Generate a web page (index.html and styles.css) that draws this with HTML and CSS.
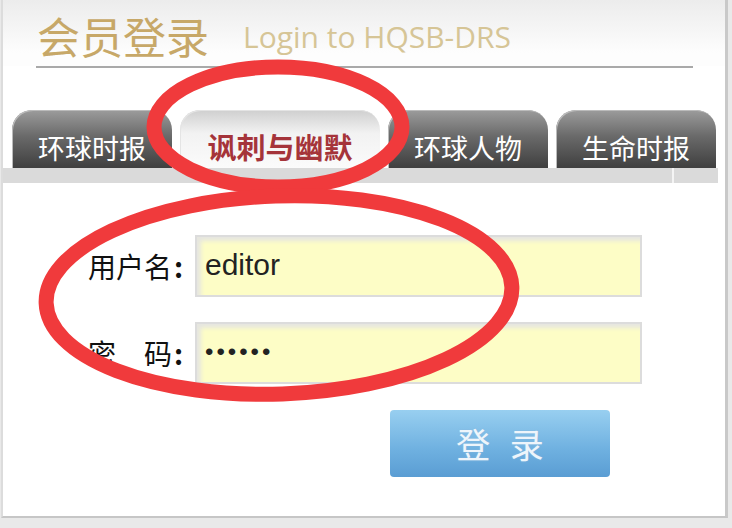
FILE: index.html
```html
<!DOCTYPE html>
<html lang="zh-CN">
  <head>
    <meta charset="utf-8">
    <meta name="viewport" content="width=device-width, initial-scale=1">
    <title>会员登录</title>
    <link rel="stylesheet" href="styles.css">
  </head>
  <body>
  <div id="panel">
    <div id="head">
      <h1>会员登录</h1><span class="sub">Login to HQSB-DRS</span>
    </div>
    <div id="rule"></div>
    <div id="tabs">
      <div class="tab">环球时报</div>
      <div class="tab active">讽刺与幽默</div>
      <div class="tab">环球人物</div>
      <div class="tab">生命时报</div>
    </div>
    <div id="band"><span class="notch"></span></div>
    <form id="login" onsubmit="return false">
      <label for="user">用户名<b>:</b></label>
      <input id="user" type="text" value="editor">
      <label for="pass">密　码<b>:</b></label>
      <input id="pass" type="password" value="123456">
      <button class="go">登 录</button>
    </form>
  </div>
  <!-- red marks drawn over the screenshot -->
  <svg id="marks" width="732" height="528" viewBox="0 0 732 528">
    <ellipse cx="278" cy="127" rx="124" ry="60" />
    <ellipse cx="279" cy="295" rx="233" ry="99" transform="rotate(-2 279 295)" />
  </svg>
  </body>
</html>
```

FILE: styles.css
```css
html, body {
  margin: 0;
  padding: 0;
  width: 100%;
  height: 100%;
}

body {
  background: #e9e9e9;
  font-family: "Noto Sans CJK SC", "Noto Sans", sans-serif;
  position: relative;
  overflow: hidden;
}

#panel {
  margin-left: 1px;
  width: 722px;
  height: 516px;
  background: #fff;
  border-left: 2px solid #dcdcdc;
  border-right: 3px solid #c9c9c9;
  border-bottom: 2px solid #c6c6c6;
}

#head {
  height: 66px;
  padding-left: 34px;
  display: flex;
  align-items: center;
  background: linear-gradient(#ececec, #fdfdfd 80%);
}

#head h1 {
  margin: 0;
  font-size: 43px;
  font-weight: normal;
  line-height: 1;
  color: #c7a868;
  position: relative;
  top: 2px;
}

#head .sub {
  margin-left: 34px;
  font-family: "Open Sans", sans-serif;
  font-size: 30px;
  color: #d6c596;
  position: relative;
  top: 3px;
}

#rule {
  height: 2px;
  margin: 0 32px 0 33px;
  background: #a9a9a9;
}

#tabs {
  margin-top: 42px;
  padding-left: 9px;
  display: flex;
  gap: 8px;
}

.tab {
  width: 160px;
  height: 58px;
  box-sizing: border-box;
  border-radius: 20px 20px 0 0;
  background: linear-gradient(#9c9c9c, #6a6a6a 45%, #3f3f3f);
  color: #fff;
  font-size: 27px;
  display: flex;
  align-items: flex-end;
  justify-content: center;
  padding-bottom: 1px;
  box-shadow: inset 1px 1px 0 #bbb;
}

.tab.active {
  width: 200px;
  background: linear-gradient(#cfcfcf, #f2f2f2 40%, #fbfbfb);
  color: #a5343a;
  font-weight: bold;
  font-size: 29px;
  box-shadow: inset 1px 1px 0 #e4e4e4;
}

#band {
  height: 15px;
  background: #dadada;
  margin-right: 7px;
  position: relative;
}

#band .notch {
  position: absolute;
  left: 669px;
  top: 0;
  width: 2px;
  height: 15px;
  background: #f4f4f4;
}

#login {
  margin-top: 52px;
  display: grid;
  grid-template-columns: 180px 447px;
  column-gap: 12px;
  row-gap: 25px;
  align-items: center;
}

#login label {
  text-align: right;
  font-size: 28px;
  color: #111;
}

#login label b {
  margin-left: 2px;
}

#login input {
  height: 62px;
  box-sizing: border-box;
  border: 2px solid #dcdcdc;
  background: #fdfdc6;
  box-shadow: inset 4px 4px 4px #e6e6e0;
  padding: 0 0 2px 8px;
  font-family: "Liberation Sans", Arial, sans-serif;
  font-size: 30px;
  color: #222;
  outline: none;
}

#login input[type=password] {
  letter-spacing: 3px;
  font-size: 24px;
}

#login .go {
  grid-column: 2;
  margin-top: 1px;
  margin-left: 195px;
  width: 220px;
  height: 67px;
  border: none;
  border-radius: 4px;
  background: linear-gradient(#98cff0, #6eb0e0 60%, #5a9dd3);
  color: #eef5fb;
  font-family: "Noto Sans CJK SC", sans-serif;
  font-size: 34px;
  letter-spacing: 6px;
  text-indent: 6px;
  text-shadow: 0 0 2px #8ab8dc;
}

#marks {
  position: absolute;
  left: 0;
  top: 0;
  pointer-events: none;
}

#marks ellipse {
  fill: none;
  stroke: #f03a3c;
  stroke-width: 15;
}
```
